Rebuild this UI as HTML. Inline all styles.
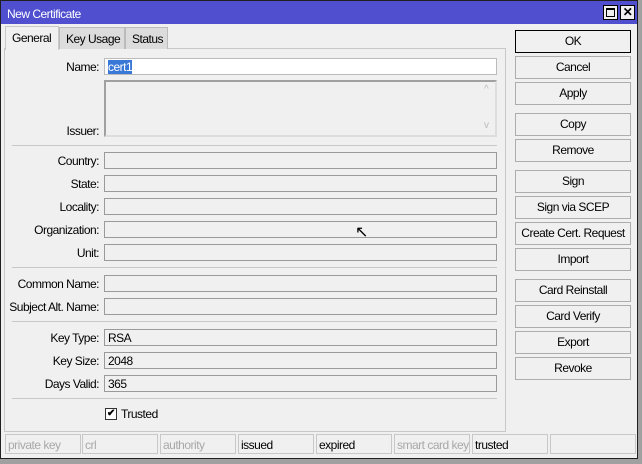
<!DOCTYPE html>
<html><head><style>
*{margin:0;padding:0;box-sizing:border-box}
body{width:642px;height:464px;background:#a0a0a0;position:relative;overflow:hidden;font-family:"Liberation Sans",sans-serif;font-size:12px;color:#000;letter-spacing:-0.5px;white-space:nowrap}
.a{position:absolute}
#win{left:0;top:0;width:638px;height:459px;background:#f0f0f0;border:1px solid #202020}
#title{left:1px;top:1px;width:636px;height:23px;background:#4f4fcf;color:#fff;padding:6px 0 0 6px;font-size:12px}
.tb{top:5px;width:15px;height:15px;background:#f0f0f0;border:1px solid #000}
.tab{top:27px;height:22px;border:1px solid #bbb;border-bottom:none;background:#dcdcdc;padding:4px 0 0 6px}
#panel{left:4px;top:48px;width:502px;height:384px;border:1px solid #c8c8c8;background:#f0f0f0}
.lbl{width:96px;text-align:right;left:3px}
.f{left:104px;width:393px;height:17px;border:1px solid #9a9a9a;background:#f0f0f0;padding:1px 3px}
.sep{left:12px;width:485px;height:1px;background:#c8c8c8}
.btn{left:515px;width:116px;height:23px;border:1px solid #adadad;background:#f0f0f0;text-align:center;line-height:21px}
.st{top:434px;height:20px;width:76px;border:1px solid #c8c8c8;padding:3px 2px;color:#a8a8a8;overflow:hidden}
.st.k{color:#000}
</style></head><body>
<div id="win" class="a"></div>
<div id="title" class="a">New Certificate</div>
<div class="a tb" style="left:603px"><div class="a" style="left:2px;top:2px;width:9px;height:9px;border:1px solid #000;border-top-width:2px"></div></div>
<div class="a tb" style="left:620px;font-weight:bold;text-align:center;line-height:12px;font-size:12px">✕</div>
<div id="panel" class="a"></div>
<div class="a tab" style="left:59px;width:66px">Key Usage</div>
<div class="a tab" style="left:125px;width:43px">Status</div>
<div class="a tab" style="left:5px;width:54px;top:26px;height:24px;background:#f0f0f0;border-color:#c8c8c8">General</div>

<div class="a lbl" style="top:60px">Name:</div>
<div class="a f" style="top:58px;background:#fff;border-color:#bbb"><span style="background:#3a78d8;color:#fff">cert1</span></div>
<div class="a f" style="top:80px;height:57px;border:2px solid #a0a0a0;border-right-color:#ddd;border-bottom-color:#ddd"></div>
<div class="a" style="left:484px;top:84px;color:#bbb;font-size:10px">^</div>
<div class="a" style="left:484px;top:120px;color:#bbb;font-size:10px">v</div>
<div class="a lbl" style="top:124px">Issuer:</div>
<div class="a sep" style="top:145px"></div>

<div class="a lbl" style="top:154px">Country:</div><div class="a f" style="top:152px"></div>
<div class="a lbl" style="top:177px">State:</div><div class="a f" style="top:175px"></div>
<div class="a lbl" style="top:200px">Locality:</div><div class="a f" style="top:198px"></div>
<div class="a lbl" style="top:223px">Organization:</div><div class="a f" style="top:221px"></div>
<div class="a lbl" style="top:246px">Unit:</div><div class="a f" style="top:244px"></div>
<div class="a sep" style="top:267px"></div>
<div class="a lbl" style="top:277px">Common Name:</div><div class="a f" style="top:275px"></div>
<div class="a lbl" style="top:300px">Subject Alt. Name:</div><div class="a f" style="top:298px"></div>
<div class="a sep" style="top:321px"></div>
<div class="a lbl" style="top:331px">Key Type:</div><div class="a f" style="top:329px">RSA</div>
<div class="a lbl" style="top:354px">Key Size:</div><div class="a f" style="top:352px">2048</div>
<div class="a lbl" style="top:377px">Days Valid:</div><div class="a f" style="top:375px">365</div>
<div class="a sep" style="top:398px"></div>
<div class="a" style="left:105px;top:408px;width:12px;height:12px;border:1px solid #333;background:#fff;font-size:10px;line-height:10px;text-align:center;font-weight:bold">✔</div>
<div class="a" style="left:121px;top:407px">Trusted</div>

<div class="a btn" style="top:30px;border-color:#000">OK</div>
<div class="a btn" style="top:56px">Cancel</div>
<div class="a btn" style="top:82px">Apply</div>
<div class="a btn" style="top:113px">Copy</div>
<div class="a btn" style="top:139px">Remove</div>
<div class="a btn" style="top:170px">Sign</div>
<div class="a btn" style="top:196px">Sign via SCEP</div>
<div class="a btn" style="top:222px">Create Cert. Request</div>
<div class="a btn" style="top:248px">Import</div>
<div class="a btn" style="top:279px">Card Reinstall</div>
<div class="a btn" style="top:305px">Card Verify</div>
<div class="a btn" style="top:331px">Export</div>
<div class="a btn" style="top:357px">Revoke</div>

<div class="a st" style="left:5px">private key</div>
<div class="a st" style="left:82px">crl</div>
<div class="a st" style="left:160px">authority</div>
<div class="a st k" style="left:238px">issued</div>
<div class="a st k" style="left:316px">expired</div>
<div class="a st" style="left:394px">smart card key</div>
<div class="a st k" style="left:472px">trusted</div>
<div class="a st" style="left:550px;width:86px"></div>
<div class="a" style="left:355px;top:222px;font-size:16px">&#8598;</div>
</body></html>
